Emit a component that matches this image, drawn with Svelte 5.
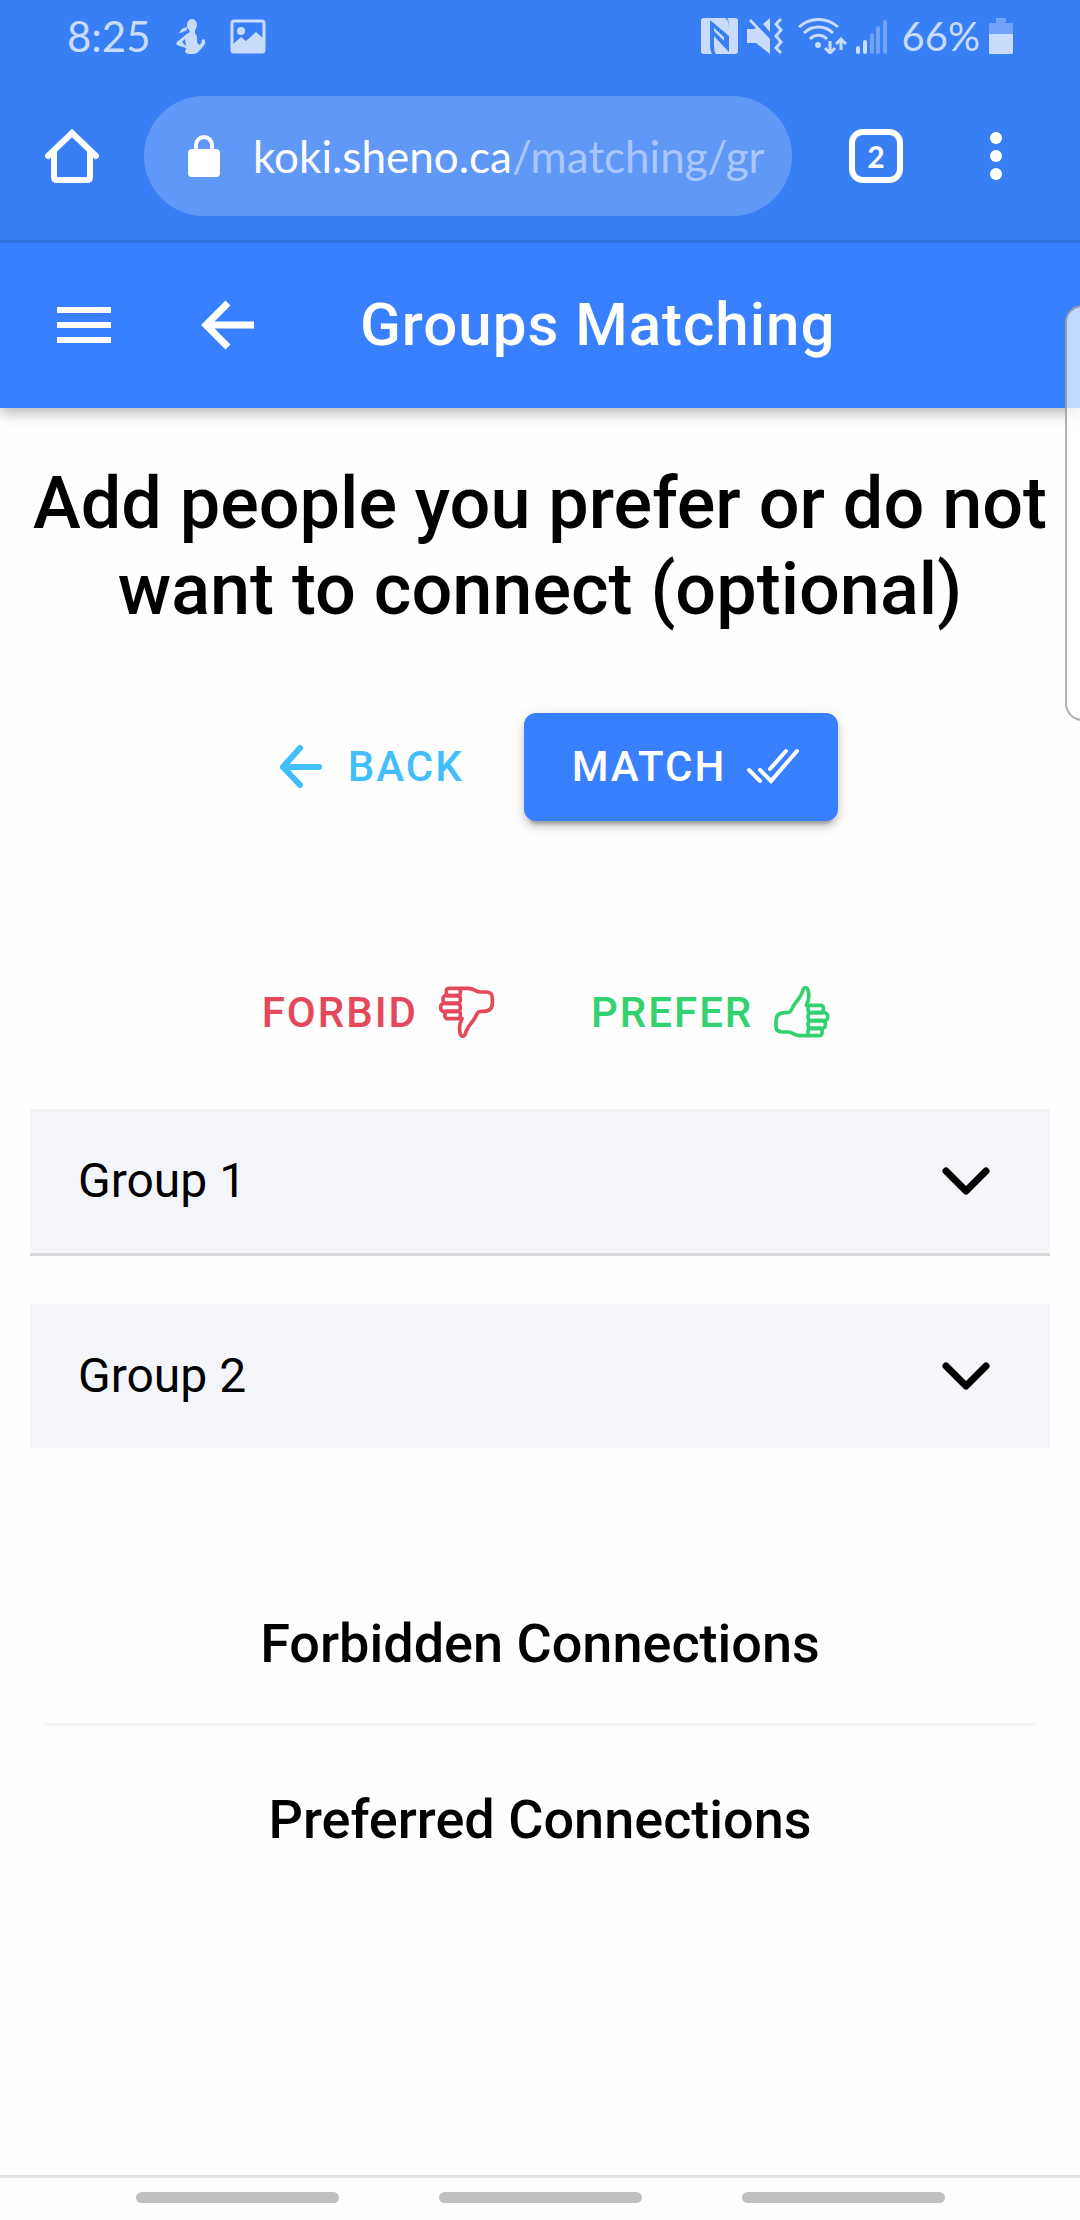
<script>
  const groups = [
    { name: 'Group 1', lined: true },
    { name: 'Group 2', lined: false }
  ];
  const bars = [
    { x: 0, h: 8, on: true },
    { x: 7, h: 14, on: true },
    { x: 14, h: 21, on: false },
    { x: 20, h: 28, on: false },
    { x: 27, h: 34, on: false }
  ];
</script>

{#snippet thumb()}
  <g fill="none" stroke="currentColor" stroke-width="11" stroke-linejoin="round" stroke-linecap="round">
    <path d="M122 95 C132 76 130 60 127 49 C124 40 114 41 112 50 C106 72 92 82 84 96 C74 115 76 117 58 117 C40 117 31 126 31 142 V158 C31 170 38 175 50 175 H68 C82 175 84 186 104 186 H127" />
    <rect x="127" y="95" width="46" height="22" rx="7" />
    <rect x="127" y="117" width="59" height="24" rx="10" />
    <rect x="127" y="141" width="52" height="23" rx="9" />
    <rect x="127" y="164" width="42" height="22" rx="7" />
  </g>
{/snippet}

<div class="screen">
  <div class="statusbar">
    <span class="clock">8:25</span>
    <svg class="figure" width="30" height="36" viewBox="0 0 30 36" aria-hidden="true">
      <ellipse cx="16" cy="7" rx="5" ry="6" fill="currentColor" />
      <path d="M14 10h5v7H13z" fill="currentColor" />
      <path d="M3 15c2-4 5-6 9-6l-2 4c-3 0-4 2-7 2z" fill="currentColor" />
      <path fill-rule="evenodd" d="M12 15h6c4 2 3 6 3 9l2 3c3-1 2-3 3-5 1-1 3-1 3 1 1 4-4 8-7 11-3 3-10 3-13 0 0-2 1-3 1-4L1 27c-1-1-1-2 0-3zM6 24l4 4-1-7z" fill="currentColor" />
    </svg>
    <svg class="photo" width="36" height="36" viewBox="0 0 36 36" aria-hidden="true">
      <rect x="2" y="3" width="32" height="31" rx="2" fill="none" stroke="currentColor" stroke-width="3" />
      <circle cx="11" cy="13" r="4" fill="currentColor" />
      <path d="M2 27l9-8 5 4 10-9 8 7v13H2z" fill="currentColor" />
    </svg>

    <span class="spacer"></span>

    <svg width="37" height="36" viewBox="0 0 37 36" aria-hidden="true">
      <path d="M3 0h21c4 3 4 6 4 12v6L9 2v21c0 6 0 10 2 13H3a3 3 0 0 1-3-3V3a3 3 0 0 1 3-3z" fill="currentColor" />
      <path d="M26 0h8a3 3 0 0 1 3 3v30a3 3 0 0 1-3 3H15c-2-3-2-6-2-13v-5l15 16V12c0-6 0-9-2-12z" fill="currentColor" />
      <path d="M13 13l10 10v-4L13 10z" fill="currentColor" />
    </svg>
    <svg width="37" height="36" viewBox="0 0 37 36" aria-hidden="true">
      <path d="M0 11h7l2-1L2 3l2-2 19 20v15L9 25H0z" fill="currentColor" />
      <path d="M23 0v14l-7-8z" fill="currentColor" />
      <path d="M34 1l-5 5 5 6-5 6 5 6-5 6 5 5" fill="none" stroke="currentColor" stroke-width="3" />
    </svg>
    <svg class="wifi" width="49" height="36" viewBox="0 0 49 36" aria-hidden="true">
      <g fill="none" stroke="currentColor" stroke-width="3">
        <path d="M1 9C12-1 29-1 40 9" />
        <path d="M6 15c8-8 21-8 29 0" />
        <path d="M12 21c5-5 12-5 17 0" />
        <path d="M32 23v11M27 30l5 5 5-5M43 32V21M38 26l5-5 5 5" />
      </g>
      <circle cx="20" cy="27" r="3" fill="currentColor" />
    </svg>
    <svg width="31" height="36" viewBox="0 0 31 36" aria-hidden="true">
      {#each bars as b}
        <rect x={b.x} y={36 - b.h} width="4" height={b.h} rx="2" fill="currentColor" opacity={b.on ? 1 : 0.4} />
      {/each}
    </svg>
    <span class="percent">66%</span>
    <svg width="24" height="36" viewBox="0 0 24 36" aria-hidden="true">
      <path d="M7 0h10v5h7v11H0V5h7z" fill="currentColor" opacity="0.4" />
      <path d="M0 16h24v19l-1 1H1l-1-1z" fill="currentColor" />
    </svg>
  </div>

  <div class="browser">
    <button class="plain" aria-label="Home">
      <svg width="54" height="54" viewBox="0 0 54 54" aria-hidden="true">
        <path d="M3 27L27 4l24 23M9 22v26q0 3 3 3h30q3 0 3-3V22" fill="none" stroke="#fff" stroke-width="6" stroke-linecap="round" />
      </svg>
    </button>
    <a class="address" href="#top">
      <svg width="32" height="42" viewBox="0 0 32 42" aria-hidden="true">
        <rect y="14" width="32" height="28" rx="4" fill="#fff" />
        <path d="M8 16V10a8 8 0 0 1 16 0v6" fill="none" stroke="#fff" stroke-width="4" />
      </svg>
      <span class="url">koki.sheno.ca<span class="path">/matching/gr</span></span>
    </a>
    <button class="tabs" aria-label="Open tabs">2</button>
    <button class="plain" aria-label="More options">
      <svg width="12" height="54" viewBox="0 0 12 54" aria-hidden="true">
        <g fill="#fff"><circle cx="6" cy="9" r="6" /><circle cx="6" cy="27" r="6" /><circle cx="6" cy="45" r="6" /></g>
      </svg>
    </button>
  </div>

  <header class="toolbar">
    <button class="plain" aria-label="Menu">
      <svg width="54" height="48" viewBox="0 0 54 48" aria-hidden="true">
        <path d="M0 9h54M0 24h54M0 39h54" stroke="#fff" stroke-width="6" />
      </svg>
    </button>
    <button class="plain" aria-label="Go back">
      <svg width="54" height="50" viewBox="0 0 54 50" aria-hidden="true">
        <path d="M53 25H7M27 3L5 25l22 22" fill="none" stroke="#fff" stroke-width="7" />
      </svg>
    </button>
    <h1>Groups Matching</h1>
  </header>

  <main>
    <h2>Add people you prefer or do not want to connect (optional)</h2>

    <div class="actions">
      <button class="btn back">
        <svg width="54" height="44" viewBox="0 0 54 44" aria-hidden="true">
          <path d="M41 23H5M22 4L5 23l17 18" fill="none" stroke="currentColor" stroke-width="6" stroke-linecap="round" stroke-linejoin="round" />
        </svg>
        BACK
      </button>
      <button class="btn match">
        MATCH
        <svg width="54" height="38" viewBox="0 0 54 38" aria-hidden="true">
          <path d="M3 23l11 11M14 23l11 11L51 4M24 22L40 4" fill="none" stroke="currentColor" stroke-width="4" stroke-linecap="round" />
        </svg>
      </button>
    </div>

    <div class="actions choices">
      <button class="btn forbid">
        FORBID
        <svg width="57" height="54" viewBox="24 34 171 162" aria-hidden="true">
          <g transform="rotate(180 109 115)">{@render thumb()}</g>
        </svg>
      </button>
      <button class="btn prefer">
        PREFER
        <svg width="57" height="54" viewBox="22 34 171 162" aria-hidden="true">{@render thumb()}</svg>
      </button>
    </div>

    <div class="groups">
      {#each groups as g}
        <button class="group" class:lined={g.lined}>
          <span>{g.name}</span>
          <svg width="48" height="30" viewBox="0 0 48 30" aria-hidden="true">
            <path d="M4 5l20 20L44 5" fill="none" stroke="#000" stroke-width="7" stroke-linecap="round" stroke-linejoin="round" />
          </svg>
        </button>
      {/each}
    </div>

    <section class="connections">
      <h3>Forbidden Connections</h3>
      <hr />
      <h3>Preferred Connections</h3>
    </section>
  </main>

  <nav class="gestures" aria-label="System navigation">
    <button aria-label="Recent apps"></button>
    <button aria-label="Home screen"></button>
    <button aria-label="Back"></button>
  </nav>

  <aside class="edge" aria-label="Edge panel handle"></aside>
</div>

<style>
  :global(body) {
    margin: 0;
    background: #fefefe;
  }
  .screen {
    position: relative;
    display: flex;
    flex-direction: column;
    min-height: 100vh;
    overflow: hidden;
    font-family: Roboto, sans-serif;
    color: #000;
  }
  svg {
    display: block;
    flex: none;
  }
  button {
    margin: 0;
    padding: 0;
    border: 0;
    background: none;
    font: inherit;
    color: inherit;
    cursor: pointer;
  }
  .statusbar {
    display: flex;
    align-items: center;
    gap: 9px;
    box-sizing: border-box;
    height: 72px;
    padding: 0 67px;
    background: #387ef5;
    color: #cadcfc;
    font: 40px/48px Lato, sans-serif;
  }
  .clock {
    font-size: 42px;
  }
  .figure {
    margin-left: 16px;
  }
  .photo {
    margin-left: 15px;
  }
  .wifi {
    margin-left: 5px;
  }
  .percent {
    margin-left: 6px;
  }
  .spacer {
    flex: 1;
  }
  .browser {
    display: flex;
    align-items: center;
    padding: 24px 78px 24px 45px;
    background: #387ef5;
    color: #fff;
  }
  .address {
    display: flex;
    flex: 1;
    align-items: center;
    gap: 33px;
    min-width: 0;
    height: 120px;
    box-sizing: border-box;
    margin: 0 57px 0 45px;
    padding: 0 24px 0 44px;
    border-radius: 60px;
    background: #6098f7;
    color: #fff;
    text-decoration: none;
  }
  .url {
    overflow: hidden;
    white-space: nowrap;
    font: 44px/60px Lato, sans-serif;
  }
  .path {
    color: #a9c7fb;
  }
  .tabs {
    box-sizing: border-box;
    width: 54px;
    height: 54px;
    margin-right: 87px;
    border: 6px solid #fff;
    border-radius: 14px;
    font: 700 30px/40px Lato, sans-serif;
  }
  .toolbar {
    display: flex;
    align-items: center;
    box-sizing: border-box;
    height: 168px;
    padding: 0 57px 2px;
    border-top: 3px solid #3371dd;
    background: #3880ff;
    color: #fff;
    box-shadow: 0 6px 12px rgba(0, 0, 0, 0.25);
    clip-path: inset(0 0 -30px 0);
  }
  .toolbar button + button {
    margin-left: 90px;
  }
  h1 {
    margin: 0 0 0 105px;
    font-size: 60px;
    line-height: 72px;
    font-weight: 500;
    letter-spacing: 1px;
  }
  main {
    flex: 1;
    padding: 53px 30px 60px;
  }
  h2 {
    margin: 0;
    font-size: 72px;
    line-height: 86px;
    font-weight: 500;
    text-align: center;
  }
  .actions {
    display: flex;
    justify-content: center;
    gap: 12px;
    margin-top: 80px;
  }
  .choices {
    margin-top: 138px;
  }
  .btn {
    display: flex;
    align-items: center;
    gap: 20px;
    box-sizing: border-box;
    height: 108px;
    padding: 0 36px 2px 48px;
    border-radius: 12px;
    font-size: 42px;
    font-weight: 500;
    letter-spacing: 2px;
  }
  .back {
    gap: 16px;
    padding: 0 48px 2px 36px;
    color: #42bffb;
  }
  .match {
    padding-right: 38px;
    background: #3880ff;
    color: #fff;
    box-shadow: 0 9px 3px -6px rgba(0, 0, 0, 0.2), 0 6px 6px rgba(0, 0, 0, 0.14), 0 3px 15px rgba(0, 0, 0, 0.12);
  }
  .forbid {
    color: #e5475b;
  }
  .prefer {
    color: #33d170;
  }
  .groups {
    display: flex;
    flex-direction: column;
    gap: 48px;
    margin-top: 42px;
  }
  .group {
    display: flex;
    align-items: center;
    justify-content: space-between;
    height: 144px;
    padding: 0 60px 0 48px;
    background: #f4f5f9;
    font-size: 48px;
    line-height: 60px;
  }
  .lined {
    height: 147px;
    border-bottom: 3px solid #d7d8da;
  }
  .connections {
    margin: 163px 15px 0;
    text-align: center;
  }
  h3 {
    margin: 0;
    font-size: 54px;
    line-height: 65px;
    font-weight: 500;
  }
  hr {
    height: 3px;
    margin: 47px 0 61px;
    border: 0;
    background: #f4f5f9;
  }
  .gestures {
    display: flex;
    justify-content: center;
    gap: 100px;
    padding: 14px 0 17px;
    border-top: 3px solid #e3e4e1;
  }
  .gestures button {
    width: 203px;
    height: 11px;
    border-radius: 6px;
    background: #c0c0c0;
  }
  .edge {
    position: absolute;
    top: 305px;
    right: -20px;
    box-sizing: border-box;
    width: 35px;
    height: 416px;
    border: 2px solid rgba(100, 100, 100, 0.5);
    border-radius: 20px;
    background: rgba(255, 255, 255, 0.7);
  }
</style>
